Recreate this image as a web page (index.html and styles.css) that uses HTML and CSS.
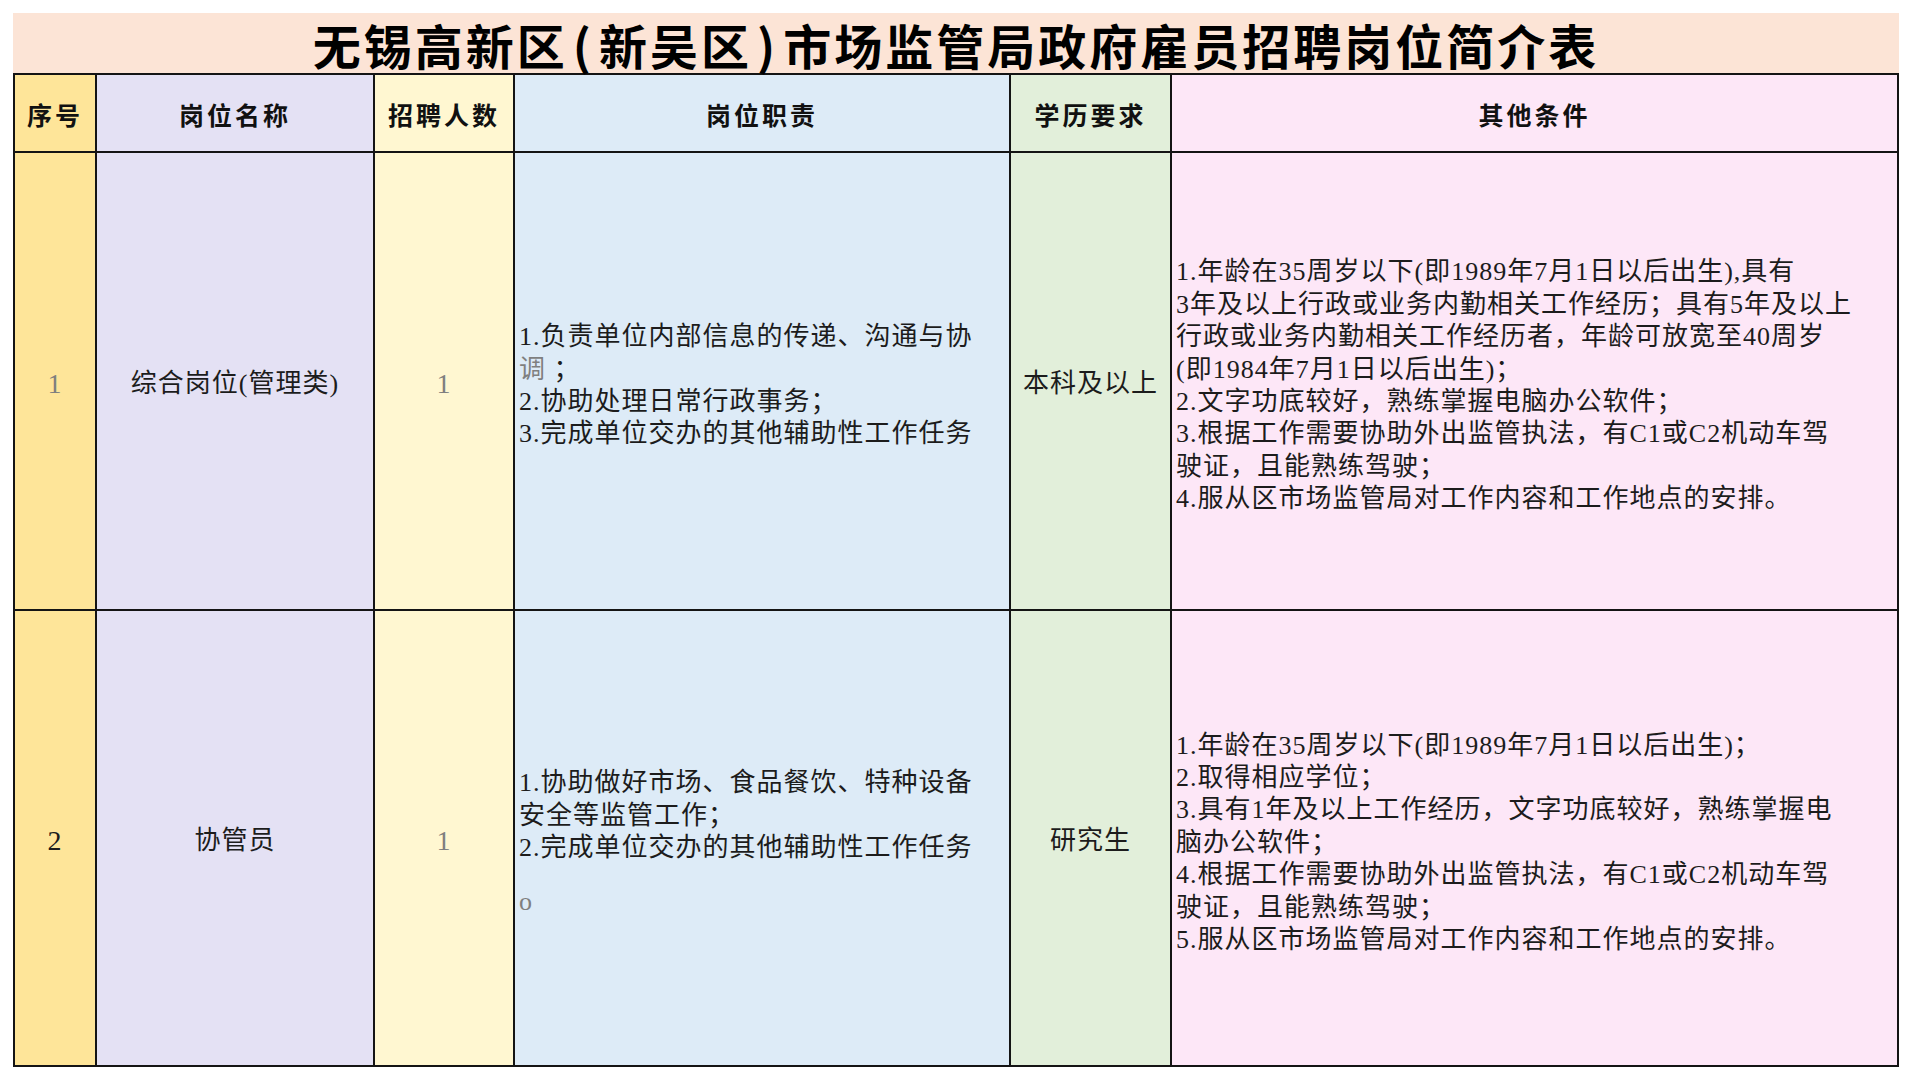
FILE: index.html
```html
<!DOCTYPE html>
<html lang="zh-CN">
<head>
<meta charset="utf-8">
<title>无锡高新区(新吴区)市场监管局政府雇员招聘岗位简介表</title>
<link rel="stylesheet" href="styles.css">
</head>
<body>
<div class="sheet">
  <div class="title">无锡高新区<span class="paren">(</span>新吴区<span class="paren">)</span>市场监管局政府雇员招聘岗位简介表</div>
  <div class="grid">
    <div class="cell head c1">序号</div>
    <div class="cell head c2">岗位名称</div>
    <div class="cell head c3">招聘人数</div>
    <div class="cell head c4">岗位职责</div>
    <div class="cell head c5">学历要求</div>
    <div class="cell head c6">其他条件</div>

    <div class="cell body c1 num gray">1</div>
    <div class="cell body c2">综合岗位(管理类)</div>
    <div class="cell body c3 num gray">1</div>
    <div class="cell body c4 text">
      <div class="lines">1.负责单位内部信息的传递、沟通与协<br><span class="gray">调</span> ；<br>2.协助处理日常行政事务；<br>3.完成单位交办的其他辅助性工作任务</div>
    </div>
    <div class="cell body c5">本科及以上</div>
    <div class="cell body c6 text">
      <div class="lines">1.年龄在35周岁以下(即1989年7月1日以后出生),具有<br>3年及以上行政或业务内勤相关工作经历；具有5年及以上<br>行政或业务内勤相关工作经历者，年龄可放宽至40周岁<br>(即1984年7月1日以后出生)；<br>2.文字功底较好，熟练掌握电脑办公软件；<br>3.根据工作需要协助外出监管执法，有C1或C2机动车驾<br>驶证，且能熟练驾驶；<br>4.服从区市场监管局对工作内容和工作地点的安排。</div>
    </div>

    <div class="cell body c1 num">2</div>
    <div class="cell body c2">协管员</div>
    <div class="cell body c3 num gray">1</div>
    <div class="cell body c4 text">
      <div class="lines">1.协助做好市场、食品餐饮、特种设备<br>安全等监管工作；<br>2.完成单位交办的其他辅助性工作任务</div>
      <div class="tail gray">o</div>
    </div>
    <div class="cell body c5">研究生</div>
    <div class="cell body c6 text">
      <div class="lines">1.年龄在35周岁以下(即1989年7月1日以后出生)；<br>2.取得相应学位；<br>3.具有1年及以上工作经历，文字功底较好，熟练掌握电<br>脑办公软件；<br>4.根据工作需要协助外出监管执法，有C1或C2机动车驾<br>驶证，且能熟练驾驶；<br>5.服从区市场监管局对工作内容和工作地点的安排。</div>
    </div>
  </div>
</div>
</body>
</html>
```

FILE: styles.css
```css
html, body {
  margin: 0;
  padding: 0;
  background: #ffffff;
}

.sheet {
  margin: 13px 0 0 13px;
  width: 1886px;
}

.title {
  box-sizing: border-box;
  height: 60px;
  padding-top: 2px;
  background: #fce4d6;
  display: flex;
  align-items: center;
  justify-content: center;
  font-family: "Noto Sans CJK SC", sans-serif;
  font-weight: 700;
  font-size: 48px;
  letter-spacing: 3px;
  line-height: 1;
  color: #000000;
  white-space: nowrap;
}

.paren {
  margin: 0 5px;
}

.grid {
  display: grid;
  grid-template-columns: 82px 278px 140px 496px 161px 727px;
  grid-template-rows: 78px 458px 456px;
  border-top: 2px solid #141414;
  border-left: 2px solid #141414;
}

.cell {
  box-sizing: border-box;
  border-right: 2px solid #141414;
  border-bottom: 2px solid #141414;
  display: flex;
  flex-direction: column;
  align-items: center;
  justify-content: center;
  font-family: "Liberation Serif", "Noto Sans CJK SC", serif;
  font-size: 26px;
  letter-spacing: 1px;
  line-height: 32.4px;
  color: #1c1c1c;
  white-space: nowrap;
}

.head {
  font-family: "Noto Sans CJK SC", sans-serif;
  font-weight: 700;
  font-size: 25px;
  letter-spacing: 3px;
  color: #111111;
  padding-top: 2px;
}

.body {
  padding-top: 7px;
}

.c1 { background: #fee599; }
.c2 { background: #e4e1f4; }
.c3 { background: #fff7d1; }
.c4 { background: #ddebf7; }
.c5 { background: #e2efda; }
.c6 { background: #fde7f7; }

.text {
  align-items: flex-start;
  padding-left: 4px;
  padding-top: 10px;
}

.num {
  font-size: 28px;
}

.gray {
  color: #7f7f7f;
}

.tail {
  margin-top: 22px;
}
```
